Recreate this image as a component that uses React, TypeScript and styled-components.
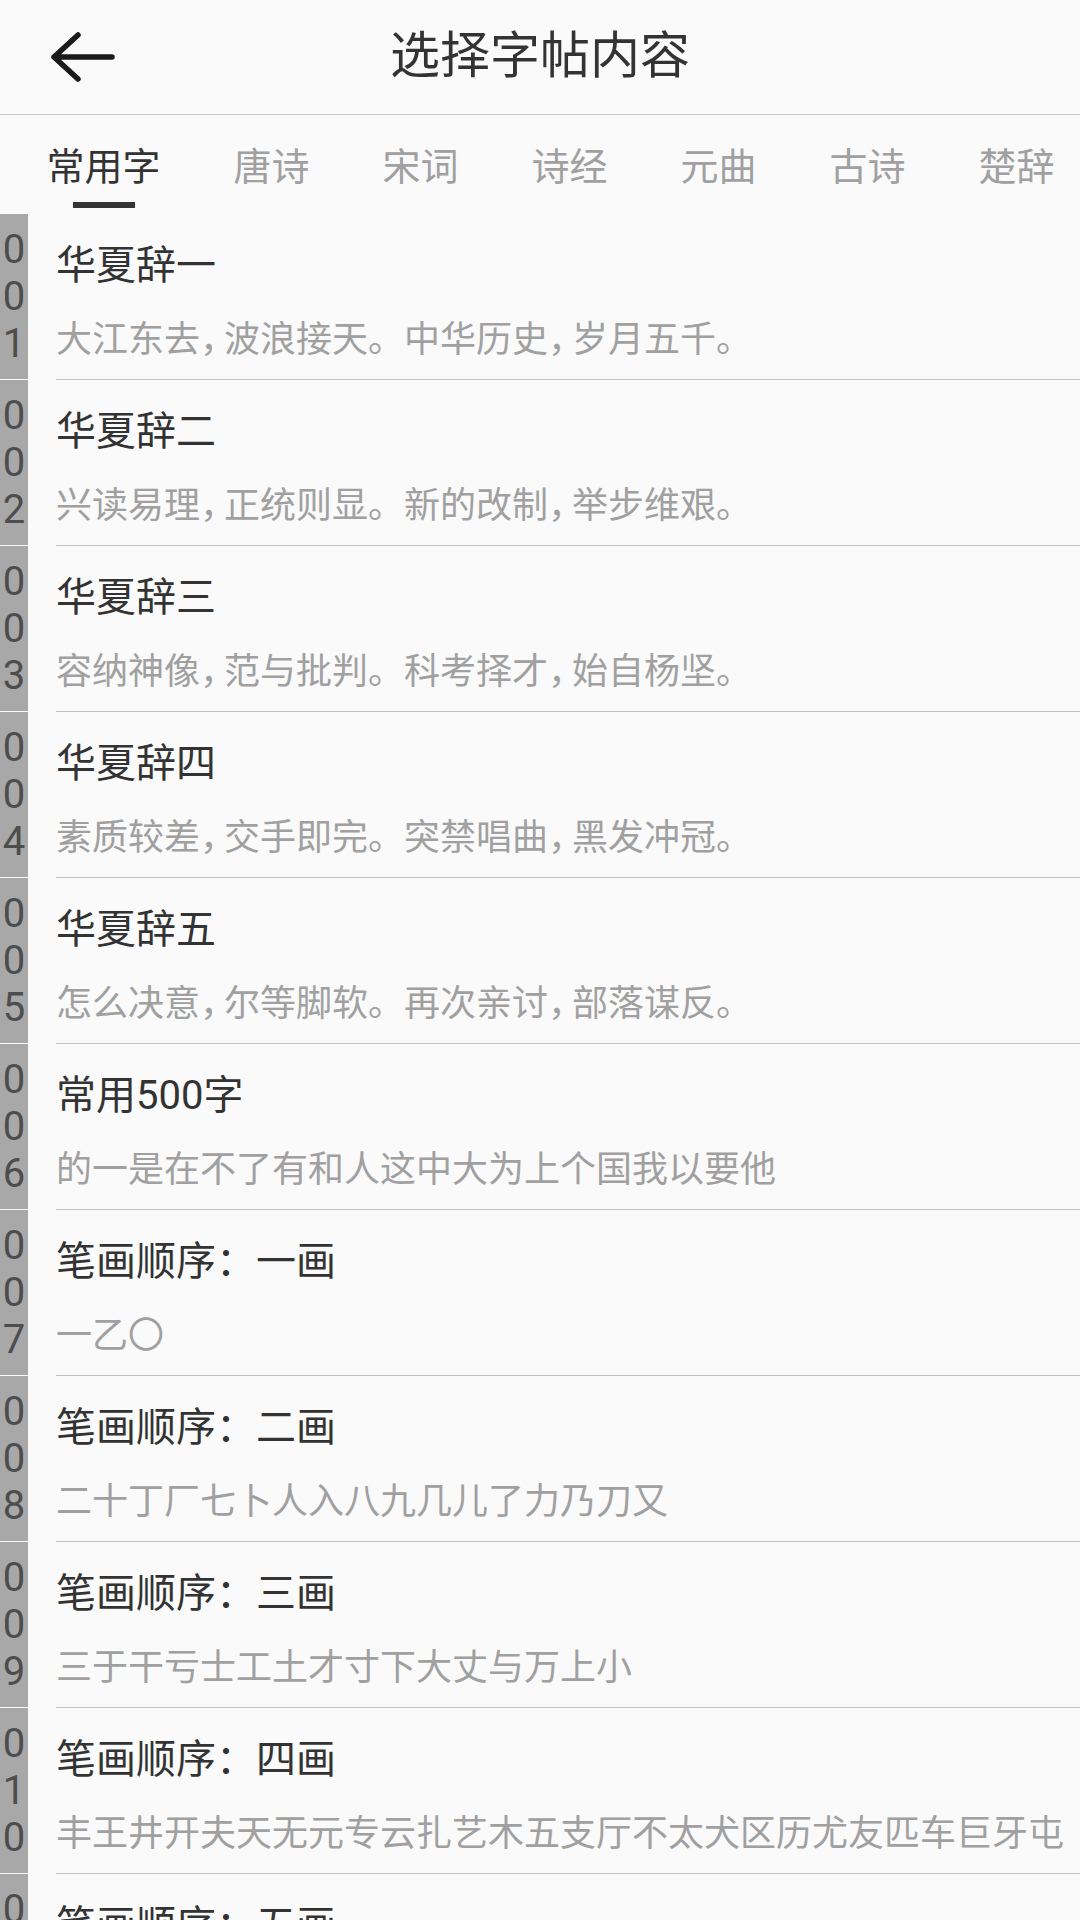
import styled, { createGlobalStyle } from "styled-components";

const GlobalStyle = createGlobalStyle`
  html, body {
    margin: 0;
    padding: 0;
    background: #fafafa;
  }
  body {
    font-family: Roboto, "Noto Sans CJK SC", sans-serif;
  }
`

const Screen = styled.div`
  width: 1080px;
  height: 1920px;
  overflow: hidden;
  background: #fafafa;
  display: flex;
  flex-direction: column;
`

const TitleBar = styled.header`
  height: 114px;
  flex-shrink: 0;
  display: grid;
  grid-template-columns: 1fr auto 1fr;
  align-items: center;
  border-bottom: 1px solid #c4c4c4;
`

const BackButton = styled.button`
  justify-self: start;
  margin-left: 47px;
  padding: 0;
  border: none;
  background: none;
  display: flex;
  width: 72px;
  height: 60px;
  cursor: pointer;
`

const Title = styled.h1`
  margin: 0;
  font-size: 50px;
  font-weight: 400;
  line-height: 60px;
  color: #333;
  margin-top: -2px;
`

const TabStrip = styled.nav`
  height: 99px;
  flex-shrink: 0;
  display: flex;
  padding-left: 10px;
  overflow: hidden;
  white-space: nowrap;
`

const Tab = styled.div<{ $active?: boolean }>`
  position: relative;
  flex-shrink: 0;
  display: flex;
  align-items: center;
  padding: 4px 36.5px 0;
  font-size: 38px;
  line-height: 46px;
  color: ${(p) => (p.$active ? "#333" : "#a0a0a0")};

  &::after {
    content: "";
    display: ${(p) => (p.$active ? "block" : "none")};
    position: absolute;
    left: 50%;
    bottom: 6px;
    width: 62px;
    height: 6px;
    margin-left: -31px;
    background: #333;
  }
`

const List = styled.div`
  display: flex;
  flex-direction: column;
`

const Row = styled.div`
  height: 165px;
  flex-shrink: 0;
  display: flex;
`

const Index = styled.div`
  width: 28px;
  flex-shrink: 0;
  background: #a8a8a8;
  color: #4d4d4d;
  font-family: Roboto, sans-serif;
  font-size: 40px;
  text-align: center;
  word-break: break-all;
  display: flex;
  align-items: center;
  justify-content: center;
`

const RowBody = styled.div`
  flex: 1;
  min-width: 0;
  padding-left: 28px;
  padding-top: 28px;
  display: flex;
  flex-direction: column;
`

const RowTitle = styled.div`
  font-size: 40px;
  line-height: 48px;
  color: #333;
  white-space: nowrap;
`

const RowText = styled.div`
  margin-top: 28px;
  font-size: 36px;
  line-height: 44px;
  color: #a0a0a0;
  white-space: nowrap;
`

const Comma = styled.span`
  letter-spacing: -12px;
`

const Separator = styled.div`
  height: 1px;
  flex-shrink: 0;
  margin-left: 56px;
  background: #c2c2c2;
`

const tabs = ["常用字", "唐诗", "宋词", "诗经", "元曲", "古诗", "楚辞"]

const items = [
  { no: "001", title: "华夏辞一", text: "大江东去，波浪接天。中华历史，岁月五千。" },
  { no: "002", title: "华夏辞二", text: "兴读易理，正统则显。新的改制，举步维艰。" },
  { no: "003", title: "华夏辞三", text: "容纳神像，范与批判。科考择才，始自杨坚。" },
  { no: "004", title: "华夏辞四", text: "素质较差，交手即完。突禁唱曲，黑发冲冠。" },
  { no: "005", title: "华夏辞五", text: "怎么决意，尔等脚软。再次亲讨，部落谋反。" },
  { no: "006", title: "常用500字", text: "的一是在不了有和人这中大为上个国我以要他" },
  { no: "007", title: "笔画顺序：一画", text: "一乙〇" },
  { no: "008", title: "笔画顺序：二画", text: "二十丁厂七卜人入八九几儿了力乃刀又" },
  { no: "009", title: "笔画顺序：三画", text: "三于干亏士工土才寸下大丈与万上小" },
  { no: "010", title: "笔画顺序：四画", text: "丰王井开夫天无元专云扎艺木五支厅不太犬区历尤友匹车巨牙屯" },
  { no: "011", title: "笔画顺序：五画", text: "玉刊示末未击打巧正扑扒功扔去甘世古节本术可丙左厉" },
]

// the app draws "，" narrower than a full cell
const withCommas = (s: string) =>
  s.split("，").flatMap((part, i) =>
    i === 0 ? [part] : [<Comma key={i}>，</Comma>, part]
  )

const BackIcon = () => (
  <svg width="72" height="60" viewBox="0 0 72 60" fill="none">
    <path
      d="M31 8 L7 30 L31 52 M7 30 H65"
      stroke="#1a1a1a"
      strokeWidth="5.5"
      strokeLinecap="round"
      strokeLinejoin="round"
    />
  </svg>
)

export default function App() {
  return (
    <>
      <GlobalStyle />
      <Screen>
        <TitleBar>
          <BackButton aria-label="返回">
            <BackIcon />
          </BackButton>
          <Title>选择字帖内容</Title>
          <div />
        </TitleBar>

        <TabStrip>
          {tabs.map((t, i) => (
            <Tab key={t} $active={i === 0}>{t}</Tab>
          ))}
        </TabStrip>

        <List>
          {items.map((it) => (
            <div key={it.no}>
              <Row>
                <Index>{it.no}</Index>
                <RowBody>
                  <RowTitle>{it.title}</RowTitle>
                  <RowText>{withCommas(it.text)}</RowText>
                </RowBody>
              </Row>
              <Separator />
            </div>
          ))}
        </List>
      </Screen>
    </>
  )
}
